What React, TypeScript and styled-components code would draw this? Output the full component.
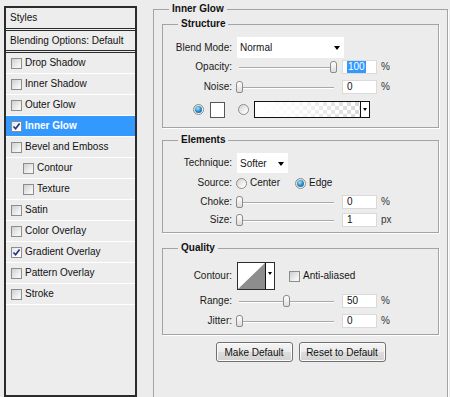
import React from "react";
import styled, { createGlobalStyle } from "styled-components";

const GlobalStyle = createGlobalStyle`
  html, body {
    margin: 0;
    padding: 0;
  }
  body {
    background: #ececec;
    font-family: "Liberation Sans", Arial, sans-serif;
    font-size: 10px;
    line-height: 12px;
    color: #151515;
    overflow: hidden;
  }
`;

const Page = styled.div`
  display: flex;
  align-items: flex-start;
  gap: 16px;
  width: 450px;
  height: 397px;
  padding-left: 4px;
  box-sizing: border-box;
  overflow: hidden;
`;

/* ---------- left: styles list ---------- */

const StylesPanel = styled.div`
  box-sizing: border-box;
  flex: none;
  width: 133px;
  height: 391px;
  margin-top: 6px;
  border: 2px solid #2b2b2b;
  background: #ededed;
  display: flex;
  flex-direction: column;
`;

const PanelHead = styled.div<{ $h: number }>`
  height: ${(p) => p.$h}px;
  display: flex;
  align-items: center;
  padding-left: 4px;
  border-bottom: 3px double #2b2b2b;
  color: #111;
`;

const StyleRow = styled.div<{ $sub?: boolean; $selected?: boolean }>`
  height: 20px;
  display: flex;
  align-items: center;
  padding-left: ${(p) => (p.$sub ? 17 : 5)}px;
  border-bottom: 1px solid #fff;
  background: ${(p) => (p.$selected ? "#3399ff" : "transparent")};
  color: ${(p) => (p.$selected ? "#fff" : "#111")};
  font-weight: ${(p) => (p.$selected ? "bold" : "normal")};
`;

const Box = styled.span<{ $checked?: boolean }>`
  box-sizing: border-box;
  flex: none;
  width: 11px;
  height: 11px;
  border: 1px solid #8c8d8d;
  background: ${(p) =>
    p.$checked
      ? "linear-gradient(135deg, #e4e4e4 0%, #ffffff 70%)"
      : "linear-gradient(135deg, #cfcfcf 0%, #f4f4f4 75%)"};
  display: flex;
  align-items: center;
  justify-content: center;
  margin-right: 3px;
`;

const CheckBox = ({ checked }: { checked?: boolean }) => (
  <Box $checked={checked}>
    {checked && (
      <svg width="9" height="9" viewBox="0 0 9 9">
        <path d="M1.5 4.5 L3.6 6.8 L7.6 1.6" fill="none" stroke="#23308a" strokeWidth="1.7" />
      </svg>
    )}
  </Box>
);

/* ---------- right: options ---------- */

const Group = styled.fieldset<{ $top: number }>`
  margin: ${(p) => p.$top}px 0 0;
  padding: 0;
  min-width: 0;
  border: 1px solid #a3a3a3;
  box-shadow: 1px 1px 0 #fff;
`;

const OuterGroup = styled(Group)`
  flex: none;
  width: 295px;
  height: 430px;
  box-sizing: border-box;
`;

const Legend = styled.legend`
  margin-left: 15px;
  padding: 0 3px;
  font-weight: bold;
  line-height: 12px;
  color: #111;
`;

const GroupBody = styled.div<{ $bottom: number }>`
  display: flex;
  flex-direction: column;
  padding-bottom: ${(p) => p.$bottom}px;
`;

const OuterBody = styled.div`
  display: flex;
  flex-direction: column;
  padding: 0 8px;
`;

const Row = styled.div<{ $top: number; $h: number; $indent?: number }>`
  display: flex;
  align-items: center;
  margin-top: ${(p) => p.$top}px;
  height: ${(p) => p.$h}px;
  padding-left: ${(p) => p.$indent ?? 0}px;
`;

const Label = styled.span`
  flex: none;
  width: 69px;
  margin-right: 4px;
  text-align: right;
  color: #1a1a1a;
`;

const Select = styled.div<{ $w: number; $h: number }>`
  box-sizing: border-box;
  width: ${(p) => p.$w}px;
  height: ${(p) => p.$h}px;
  margin-left: 1px;
  background: #fff;
  display: flex;
  align-items: center;
  justify-content: space-between;
  padding: 1px 4px 0 3px;
`;

const Arrow = styled.span<{ $size: number }>`
  width: 0;
  height: 0;
  border-left: ${(p) => p.$size}px solid transparent;
  border-right: ${(p) => p.$size}px solid transparent;
  border-top: ${(p) => p.$size + 1}px solid #000;
`;

const Track = styled.div`
  position: relative;
  flex: none;
  width: 101px;
  height: 14px;
  display: flex;
  align-items: center;
  &::before {
    content: "";
    flex: 1;
    margin: 0 3px;
    height: 1px;
    background: #a9a9a9;
    box-shadow: 0 1px 0 #fff;
  }
`;

const Thumb = styled.span`
  position: absolute;
  top: 1px;
  box-sizing: border-box;
  width: 7px;
  height: 12px;
  border: 1px solid #8b8b8b;
  border-radius: 3px 3px 2px 2px;
  background: linear-gradient(#ffffff, #dcdcdc);
`;

const Slider = ({ value }: { value: number }) => (
  <Track>
    <Thumb style={{ left: `${Math.round(value * 94)}px` }} />
  </Track>
);

const NumberBox = styled.div`
  box-sizing: border-box;
  flex: none;
  width: 35px;
  height: 14px;
  margin-left: 5px;
  background: #fff;
  border: 1px solid #dadada;
  display: flex;
  align-items: center;
  padding-left: 4px;
  color: #111;
`;

const Selected = styled.span`
  background: #3399ff;
  color: #fff;
  padding: 0 1px;
`;

const Unit = styled.span`
  margin-left: 4px;
  color: #333;
`;

const Radio = styled.span<{ $checked?: boolean; $gap?: number }>`
  box-sizing: border-box;
  flex: none;
  width: 11px;
  height: 11px;
  border-radius: 50%;
  border: 1px solid #8c8d8d;
  background: linear-gradient(135deg, #d2d2d2 0%, #fbfbfb 80%);
  display: flex;
  align-items: center;
  justify-content: center;
  margin-right: ${(p) => p.$gap ?? 3}px;
  &::after {
    content: "";
    display: ${(p) => (p.$checked ? "block" : "none")};
    width: 7px;
    height: 7px;
    border-radius: 50%;
    background: radial-gradient(circle at 40% 35%, #a6e4ff 0%, #2a8bc9 50%, #134f7c 100%);
  }
`;

const Swatch = styled.span`
  box-sizing: border-box;
  flex: none;
  width: 15px;
  height: 16px;
  background: #fff;
  border: 1px solid #555;
  margin-right: 13px;
`;

const GradientPicker = styled.div`
  box-sizing: border-box;
  flex: none;
  display: flex;
  width: 116px;
  height: 17px;
  margin-left: 1px;
  border: 1px solid #111;
`;

const GradientFill = styled.span`
  flex: 1;
  background:
    linear-gradient(to right, #ffffff 0%, rgba(255, 255, 255, 0.85) 35%, rgba(255, 255, 255, 0) 100%),
    repeating-conic-gradient(#d8d8d8 0 25%, #ffffff 0 50%) 0 0 / 8px 8px;
`;

const PickerButton = styled.span<{ $top?: number }>`
  flex: none;
  width: 9px;
  border-left: 1px solid #111;
  background: #fff;
  display: flex;
  justify-content: center;
  align-items: ${(p) => (p.$top ? "flex-start" : "center")};
  padding-top: ${(p) => p.$top ?? 0}px;
  box-sizing: border-box;
`;

const ContourPicker = styled.div`
  box-sizing: border-box;
  flex: none;
  display: flex;
  width: 38px;
  height: 28px;
  margin-left: 1px;
  border: 1px solid #2d2d2d;
  background: #fff;
`;

const ContourGraph = styled.svg`
  flex: 1;
  height: 100%;
  display: block;
`;

const RadioOption = styled.span<{ $gap: number; $left?: number }>`
  display: flex;
  align-items: center;
  margin-left: ${(p) => p.$left ?? 0}px;
  margin-right: ${(p) => p.$gap}px;
`;

const ButtonBar = styled.div`
  display: flex;
  justify-content: center;
  gap: 6px;
  margin-top: 7px;
`;

const Button = styled.button<{ $w: number }>`
  box-sizing: border-box;
  width: ${(p) => p.$w}px;
  height: 20px;
  padding: 0;
  font-family: inherit;
  font-size: 10px;
  color: #111;
  border: 1px solid #707070;
  border-radius: 3px;
  background: linear-gradient(#f4f4f4 0%, #ebebeb 50%, #dddddd 51%, #d2d2d2 100%);
  box-shadow: inset 0 0 0 1px #fcfcfc;
`;

const styleItems: { label: string; checked?: boolean; selected?: boolean; sub?: boolean }[] = [
  { label: "Drop Shadow" },
  { label: "Inner Shadow" },
  { label: "Outer Glow" },
  { label: "Inner Glow", checked: true, selected: true },
  { label: "Bevel and Emboss" },
  { label: "Contour", sub: true },
  { label: "Texture", sub: true },
  { label: "Satin" },
  { label: "Color Overlay" },
  { label: "Gradient Overlay", checked: true },
  { label: "Pattern Overlay" },
  { label: "Stroke" },
];

const App = () => {
  return (
    <>
      <GlobalStyle />
      <Page>
        <StylesPanel>
          <PanelHead $h={20}>Styles</PanelHead>
          <PanelHead $h={19}>Blending Options: Default</PanelHead>
          {styleItems.map((item) => (
            <StyleRow key={item.label} $sub={item.sub} $selected={item.selected}>
              <CheckBox checked={item.checked} />
              {item.label}
            </StyleRow>
          ))}
        </StylesPanel>

        <OuterGroup $top={3}>
          <Legend>Inner Glow</Legend>
          <OuterBody>
            <Group $top={3}>
              <Legend>Structure</Legend>
              <GroupBody $bottom={9}>
                <Row $top={7} $h={21}>
                  <Label>Blend Mode:</Label>
                  <Select $w={107} $h={21}>
                    Normal
                    <Arrow $size={3} />
                  </Select>
                </Row>
                <Row $top={2} $h={14}>
                  <Label>Opacity:</Label>
                  <Slider value={1} />
                  <NumberBox>
                    <Selected>100</Selected>
                  </NumberBox>
                  <Unit>%</Unit>
                </Row>
                <Row $top={6} $h={14}>
                  <Label>Noise:</Label>
                  <Slider value={0} />
                  <NumberBox>0</NumberBox>
                  <Unit>%</Unit>
                </Row>
                <Row $top={7} $h={17} $indent={30}>
                  <Radio $checked $gap={6} />
                  <Swatch />
                  <Radio $gap={4} />
                  <GradientPicker>
                    <GradientFill />
                    <PickerButton>
                      <Arrow $size={2} />
                    </PickerButton>
                  </GradientPicker>
                </Row>
              </GroupBody>
            </Group>

            <Group $top={6}>
              <Legend>Elements</Legend>
              <GroupBody $bottom={5}>
                <Row $top={7} $h={20}>
                  <Label>Technique:</Label>
                  <Select $w={51} $h={20}>
                    Softer
                    <Arrow $size={3} />
                  </Select>
                </Row>
                <Row $top={3} $h={14}>
                  <Label>Source:</Label>
                  <RadioOption $gap={15}>
                    <Radio />
                    Center
                  </RadioOption>
                  <RadioOption $gap={0}>
                    <Radio $checked />
                    Edge
                  </RadioOption>
                </Row>
                <Row $top={5} $h={14}>
                  <Label>Choke:</Label>
                  <Slider value={0} />
                  <NumberBox>0</NumberBox>
                  <Unit>%</Unit>
                </Row>
                <Row $top={4} $h={14}>
                  <Label>Size:</Label>
                  <Slider value={0} />
                  <NumberBox>1</NumberBox>
                  <Unit>px</Unit>
                </Row>
              </GroupBody>
            </Group>

            <Group $top={9}>
              <Legend>Quality</Legend>
              <GroupBody $bottom={6}>
                <Row $top={8} $h={28}>
                  <Label>Contour:</Label>
                  <ContourPicker>
                    <ContourGraph viewBox="0 0 1 1" preserveAspectRatio="none">
                      <polygon points="0,1 1,0 1,1" fill="#8d8d8d" />
                    </ContourGraph>
                    <PickerButton $top={9}>
                      <Arrow $size={2} />
                    </PickerButton>
                  </ContourPicker>
                  <RadioOption $gap={0} $left={14}>
                    <CheckBox />
                    Anti-aliased
                  </RadioOption>
                </Row>
                <Row $top={4} $h={14}>
                  <Label>Range:</Label>
                  <Slider value={0.5} />
                  <NumberBox>50</NumberBox>
                  <Unit>%</Unit>
                </Row>
                <Row $top={6} $h={14}>
                  <Label>Jitter:</Label>
                  <Slider value={0} />
                  <NumberBox>0</NumberBox>
                  <Unit>%</Unit>
                </Row>
              </GroupBody>
            </Group>

            <ButtonBar>
              <Button $w={77}>Make Default</Button>
              <Button $w={87}>Reset to Default</Button>
            </ButtonBar>
          </OuterBody>
        </OuterGroup>
      </Page>
    </>
  );
};

export default App;
